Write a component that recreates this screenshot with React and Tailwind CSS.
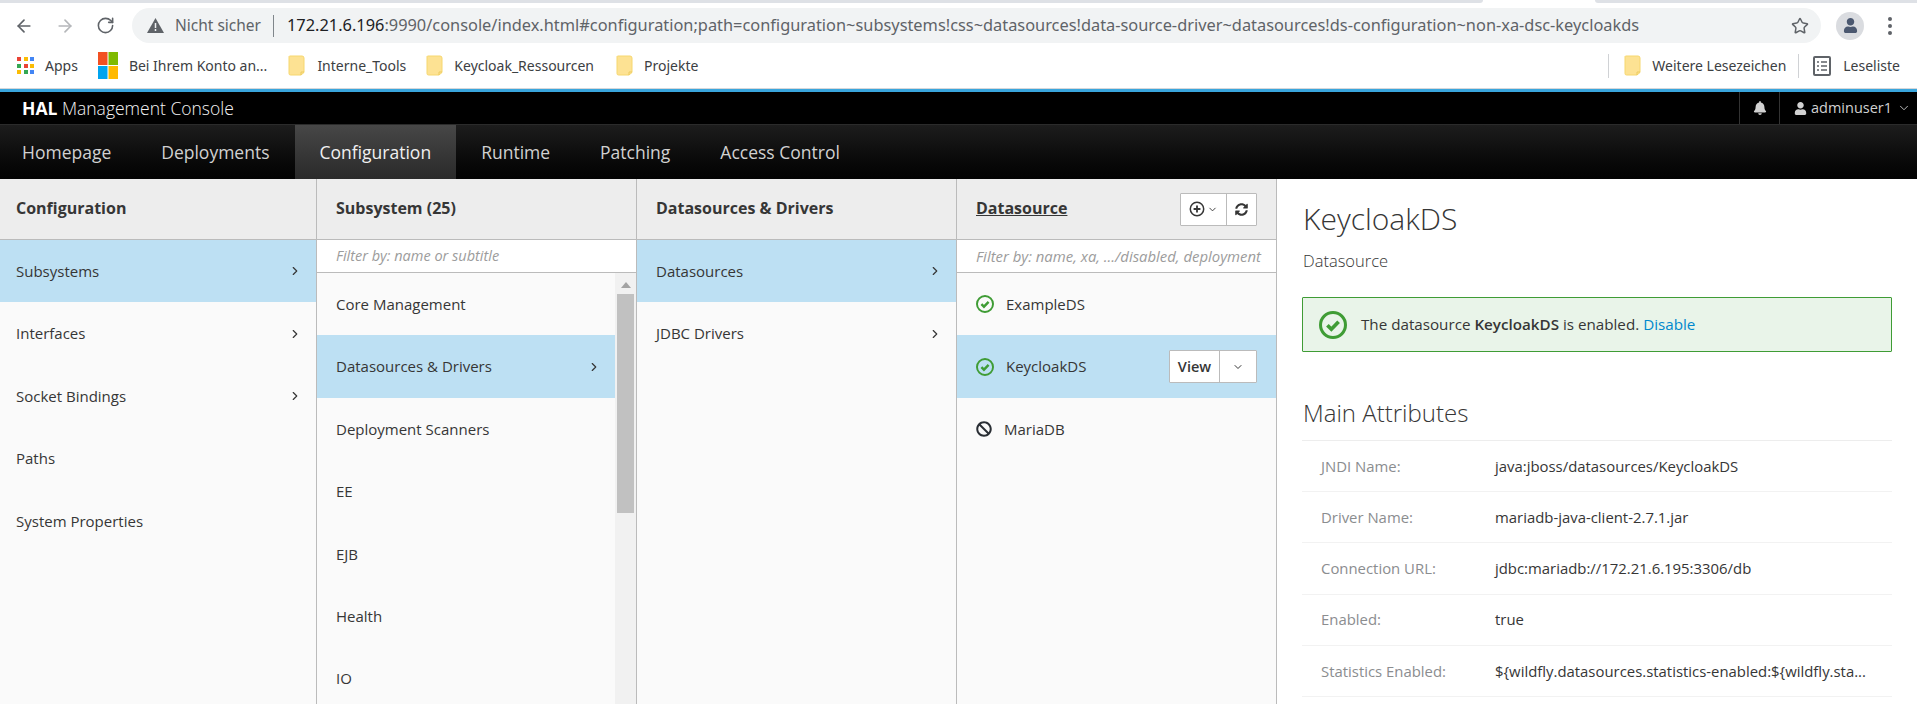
import React from 'react';
import { ArrowLeft, ArrowRight, RotateCw, Star, ChevronRight, ChevronDown } from 'lucide-react';
import { FaBell, FaUser, FaSyncAlt, FaBan } from 'react-icons/fa';

const chromeFont = "font-['Noto_Sans',sans-serif]";
const halFont = "font-['Open_Sans',sans-serif]";

const Folder = () => (
  <svg width="17" height="21" viewBox="0 0 17 21" className="shrink-0">
    <path d="M1.5 1h12.5a2 2 0 0 1 2 2v14.5l-3 2.5H2.5a1.5 1.5 0 0 1-1.5-1.5V1.5z" fill="#fde293" stroke="#f6d76f" />
    <path d="M13 20v-3h3" fill="none" stroke="#eccb5f" />
  </svg>
);

const AppsIcon = () => {
  const colors = ['#ea4335', '#fbbc04', '#4285f4', '#34a853', '#ea4335', '#fbbc04', '#fbbc04', '#34a853', '#4285f4'];
  return (
    <div className="grid grid-cols-3 gap-[2.5px] w-[17px] shrink-0">
      {colors.map((c, i) => (
        <svg key={i} width="4" height="4"><rect width="4" height="4" fill={c} /></svg>
      ))}
    </div>
  );
};

const WindowsLogo = () => (
  <svg width="20" height="27" viewBox="0 0 20 27" className="shrink-0">
    <rect width="9.5" height="13" fill="#f25022" />
    <rect x="10.5" width="9.5" height="13" fill="#7fba00" />
    <rect y="14" width="9.5" height="13" fill="#00a4ef" />
    <rect x="10.5" y="14" width="9.5" height="13" fill="#ffb900" />
  </svg>
);

const ReadingList = () => (
  <svg width="18" height="20" viewBox="0 0 18 20" className="shrink-0">
    <rect x="1" y="1" width="16" height="18" rx="1" fill="none" stroke="#5f6368" strokeWidth="2" />
    <path d="M4 6h2M8 6h6M4 10h2M8 10h6M4 14h2M8 14h6" stroke="#5f6368" strokeWidth="1.6" />
  </svg>
);

const OkIcon = ({ size = 18, stroke = 2.6 }) => (
  <svg width={size} height={size} viewBox="0 0 24 24" className="shrink-0">
    <circle cx="12" cy="12" r={12 - stroke / 2} fill="none" stroke="#3f9c35" strokeWidth={stroke} />
    <path d="M7.2 12.2l3.4 3.4 6.2-6.4" fill="none" stroke="#3f9c35" strokeWidth={stroke + 0.6} />
  </svg>
);

const PlusCircle = () => (
  <svg width="16" height="16" viewBox="0 0 16 16">
    <circle cx="8" cy="8" r="6.7" fill="none" stroke="#363636" strokeWidth="1.5" />
    <path d="M8 4.6v6.8M4.6 8h6.8" stroke="#363636" strokeWidth="1.8" />
  </svg>
);

const Row = ({ label, selected, arrow, icon, action, first }) => (
  <div className={`h-[62.4px] flex items-center ${first ? 'pl-4' : 'pl-[19px]'} pr-[14px] text-[15px] text-[#363636] ${selected ? 'bg-[#bde0f3]' : ''}`}>
    {icon}
    <span className="flex-1">{label}</span>
    {arrow && <ChevronRight size={14} className="text-[#363636]" />}
    {action}
  </div>
);

const ColumnHeader = ({ children, right, first }) => (
  <div className={`h-[61px] bg-[#ededed] border-b border-[#bbbbbb] flex items-center justify-between ${first ? 'pl-4' : 'pl-[19px]'} pr-[19px] text-[16px] font-bold text-[#363636]`}>
    <span className="mb-[2px]">{children}</span>
    {right}
  </div>
);

const Filter = ({ text, wide }) => (
  <div className={`h-[33px] bg-white border-b border-[#bbbbbb] flex items-center pl-[19px] italic text-[#9c9c9c] whitespace-nowrap ${wide ? 'text-[14.9px]' : 'text-[14.5px]'}`}>
    {text}
  </div>
);

const subsystems = ['Core Management', 'Datasources & Drivers', 'Deployment Scanners', 'EE', 'EJB', 'Health', 'IO'];
const attributes = [
  ['JNDI Name:', 'java:jboss/datasources/KeycloakDS'],
  ['Driver Name:', 'mariadb-java-client-2.7.1.jar'],
  ['Connection URL:', 'jdbc:mariadb://172.21.6.195:3306/db'],
  ['Enabled:', 'true'],
  ['Statistics Enabled:', '${wildfly.datasources.statistics-enabled:${wildfly.sta...'],
];

const App = () => {
  return (
    <div className={`h-screen w-screen overflow-hidden flex flex-col bg-white ${halFont}`}>
      {/* browser chrome */}
      <div className="h-[3px] flex shrink-0">
        <div className="w-[1483px] bg-[#dee1e6] rounded-br-md" />
        <div className="w-[112px] bg-white" />
        <div className="flex-1 bg-[#dee1e6] rounded-bl-md" />
      </div>
      <div className={`h-[35px] mt-[5px] shrink-0 flex items-center ${chromeFont}`}>
        <div className="w-[132px] flex items-center pl-[14px] gap-[21px] text-[#5f6368]">
          <ArrowLeft size={20} />
          <ArrowRight size={20} className="text-[#b5b7ba]" />
          <RotateCw size={19} />
        </div>
        <div className="w-[1689px] h-[35px] bg-[#f1f3f4] rounded-full flex items-center pl-[15px] pr-[12px] text-[15.5px] text-[#5f6368] whitespace-nowrap">
          <svg width="17" height="15" viewBox="0 0 17 15" className="shrink-0 mr-[11px]">
            <path d="M8.5 0L17 15H0z" fill="#5f6368" />
            <path d="M8.5 5v5M8.5 11v2" stroke="#f1f3f4" strokeWidth="1.5" />
          </svg>
          <span>Nicht sicher</span>
          <span className="w-px h-[22px] bg-[#80868b] ml-[12px] mr-[13px]" />
          <span className="flex-1 text-[16.38px]">
            <span className="text-[#202124]">172.21.6.196</span>:9990/console/index.html#configuration;path=configuration~subsystems!css~datasources!data-source-driver~datasources!ds-configuration~non-xa-dsc-keycloakds
          </span>
          <Star size={18} className="text-[#5f6368]" />
        </div>
        <div className="flex-1 flex items-center pl-[15px]">
          <div className="w-[28px] h-[28px] rounded-full bg-[#dadce0] flex items-center justify-center overflow-hidden">
            <FaUser size={15} className="text-[#4b5870]" />
          </div>
          <div className="ml-[24px] flex flex-col gap-[3px]">
            <span className="w-[4px] h-[4px] rounded-full bg-[#5f6368]" />
            <span className="w-[4px] h-[4px] rounded-full bg-[#5f6368]" />
            <span className="w-[4px] h-[4px] rounded-full bg-[#5f6368]" />
          </div>
        </div>
      </div>
      <div className={`h-[45px] shrink-0 flex items-center pl-[17px] text-[14px] text-[#3c4043] whitespace-nowrap ${chromeFont}`}>
        <AppsIcon />
        <span className="ml-[11px]">Apps</span>
        <span className="ml-[20px]"><WindowsLogo /></span>
        <span className="ml-[11px]">Bei Ihrem Konto an...</span>
        <span className="ml-[21px]"><Folder /></span>
        <span className="ml-[12px]">Interne_Tools</span>
        <span className="ml-[20px]"><Folder /></span>
        <span className="ml-[11px]">Keycloak_Ressourcen</span>
        <span className="ml-[22px]"><Folder /></span>
        <span className="ml-[11px]">Projekte</span>
        <div className="ml-auto flex items-center pr-[17px]">
          <span className="w-px h-[24px] bg-[#d0d2d5] mr-[15px]" />
          <Folder />
          <span className="ml-[11px]">Weitere Lesezeichen</span>
          <span className="w-px h-[24px] bg-[#d0d2d5] ml-[12px] mr-[14px]" />
          <ReadingList />
          <span className="ml-[12px]">Leseliste</span>
        </div>
      </div>
      <div className="h-[4px] shrink-0 bg-[#39a5dc] border-t border-[#d5d7da]" />

      {/* HAL header */}
      <div className="h-[32px] shrink-0 bg-black flex items-center justify-between text-white pl-[22px]">
        <div className="text-[17.5px] text-[#f5f5f5]"><b className="text-white">HAL</b> <span className="font-light">Management Console</span></div>
        <div className="flex items-center h-full text-[14.5px] text-[#d1d1d1]">
          <div className="w-[40px] h-full border-l border-[#333333] flex items-center justify-center">
            <FaBell size={14} />
          </div>
          <div className="h-full w-[138px] border-l border-[#333333] flex items-center pl-[14px]">
            <FaUser size={13} className="mr-[4px]" />
            <span>adminuser1</span>
            <ChevronDown size={14} strokeWidth={1.5} className="ml-[5px]" />
          </div>
        </div>
      </div>

      {/* navigation */}
      <div className="h-[55px] shrink-0 flex border-t border-[#2b2b2b] bg-gradient-to-b from-[#1d1d1d] to-[#030303] text-[17.5px] text-[#d1d1d1]">
        {['Homepage', 'Deployments', 'Configuration', 'Runtime', 'Patching', 'Access Control'].map((item) => (
          <div
            key={item}
            className={`h-full flex items-center px-[25px] first:pl-[22px] ${item === 'Configuration' ? 'bg-gradient-to-b from-[#474747] to-[#2a2a2a] text-[#f0f0f0]' : ''}`}
          >
            {item}
          </div>
        ))}
      </div>

      {/* finder columns */}
      <div className="flex-1 flex min-h-0">
        <div className="w-[317px] shrink-0 border-r border-[#bbbbbb] bg-[#fafafa]">
          <ColumnHeader first>Configuration</ColumnHeader>
          <Row first label="Subsystems" selected arrow />
          <Row first label="Interfaces" arrow />
          <Row first label="Socket Bindings" arrow />
          <Row first label="Paths" />
          <Row first label="System Properties" />
        </div>

        <div className="w-[320px] shrink-0 border-r border-[#bbbbbb] bg-[#fafafa] flex flex-col">
          <ColumnHeader>Subsystem (25)</ColumnHeader>
          <Filter text="Filter by: name or subtitle" />
          <div className="flex flex-1 min-h-0">
            <div className="flex-1">
              {subsystems.map((s) => (
                <Row key={s} label={s} selected={s === 'Datasources & Drivers'} arrow={s === 'Datasources & Drivers'} />
              ))}
            </div>
            <div className="w-[21px] shrink-0 bg-[#f1f1f1] flex flex-col items-center">
              <svg width="10" height="6" viewBox="0 0 10 6" className="mt-[9px]"><path d="M5 0l5 6H0z" fill="#a3a3a3" /></svg>
              <div className="w-[17px] h-[219px] mt-[6px] bg-[#c1c1c1]" />
            </div>
          </div>
        </div>

        <div className="w-[320px] shrink-0 border-r border-[#bbbbbb] bg-[#fafafa]">
          <ColumnHeader>Datasources &amp; Drivers</ColumnHeader>
          <Row label="Datasources" selected arrow />
          <Row label="JDBC Drivers" arrow />
        </div>

        <div className="w-[320px] shrink-0 border-r border-[#bbbbbb] bg-[#fafafa] flex flex-col">
          <ColumnHeader
            right={
              <div className="flex h-[33px] bg-white border border-[#bbbbbb] rounded-[1px] text-[#363636]">
                <div className="w-[46px] flex items-center justify-center gap-[2px] border-r border-[#bbbbbb]">
                  <PlusCircle />
                  <ChevronDown size={11} />
                </div>
                <div className="w-[29px] flex items-center justify-center">
                  <FaSyncAlt size={13} />
                </div>
              </div>
            }
          >
            <span className="underline">Datasource</span>
          </ColumnHeader>
          <Filter wide text="Filter by: name, xa, .../disabled, deployment" />
          <Row label="ExampleDS" icon={<span className="mr-[12px]"><OkIcon /></span>} />
          <Row
            label="KeycloakDS"
            selected
            icon={<span className="mr-[12px]"><OkIcon /></span>}
            action={
              <div className="flex h-[33px] mr-[5px] bg-white border border-[#bbbbbb] rounded-[1px]">
                <div className="w-[50px] flex items-center justify-center font-semibold text-[14.5px] border-r border-[#bbbbbb]">View</div>
                <div className="w-[36px] flex items-center justify-center"><ChevronDown size={12} /></div>
              </div>
            }
          />
          <Row label="MariaDB" icon={<FaBan size={16} className="mr-[12px] text-[#292e34]" />} />
        </div>

        {/* preview */}
        <div className="flex-1 min-w-0 pl-[25px] pr-[25px] pt-[17px]">
          <h1 className="pl-px text-[30px] leading-[46px] font-light text-[#363636]">KeycloakDS</h1>
          <p className="pl-px mt-[5px] text-[16.5px] leading-[28px] font-light text-[#363636]">Datasource</p>
          <div className="mt-[22px] h-[55px] border border-[#3f9c35] bg-[#e9f4e9] flex items-center pl-[16px] text-[15.2px] text-[#363636] rounded-[1px]">
            <OkIcon size={28} stroke={2.6} />
            <p className="ml-[14px]">
              The datasource <b className="font-semibold">KeycloakDS</b> is enabled. <a className="text-[#0088ce]">Disable</a>
            </p>
          </div>
          <h2 className="pl-px mt-[42px] pb-[8px] text-[24px] leading-[38px] font-light text-[#363636] border-b border-[#ededed]">Main Attributes</h2>
          <dl>
            {attributes.map(([k, v]) => (
              <div key={k} className="h-[51.2px] flex items-center border-b border-[#f2f2f2] pl-[19px] text-[14.9px]">
                <dt className="w-[174px] shrink-0 text-[#8b8d8f]">{k}</dt>
                <dd className="whitespace-nowrap text-[#363636]">{v}</dd>
              </div>
            ))}
          </dl>
        </div>
      </div>
    </div>
  );
};

export default App;
